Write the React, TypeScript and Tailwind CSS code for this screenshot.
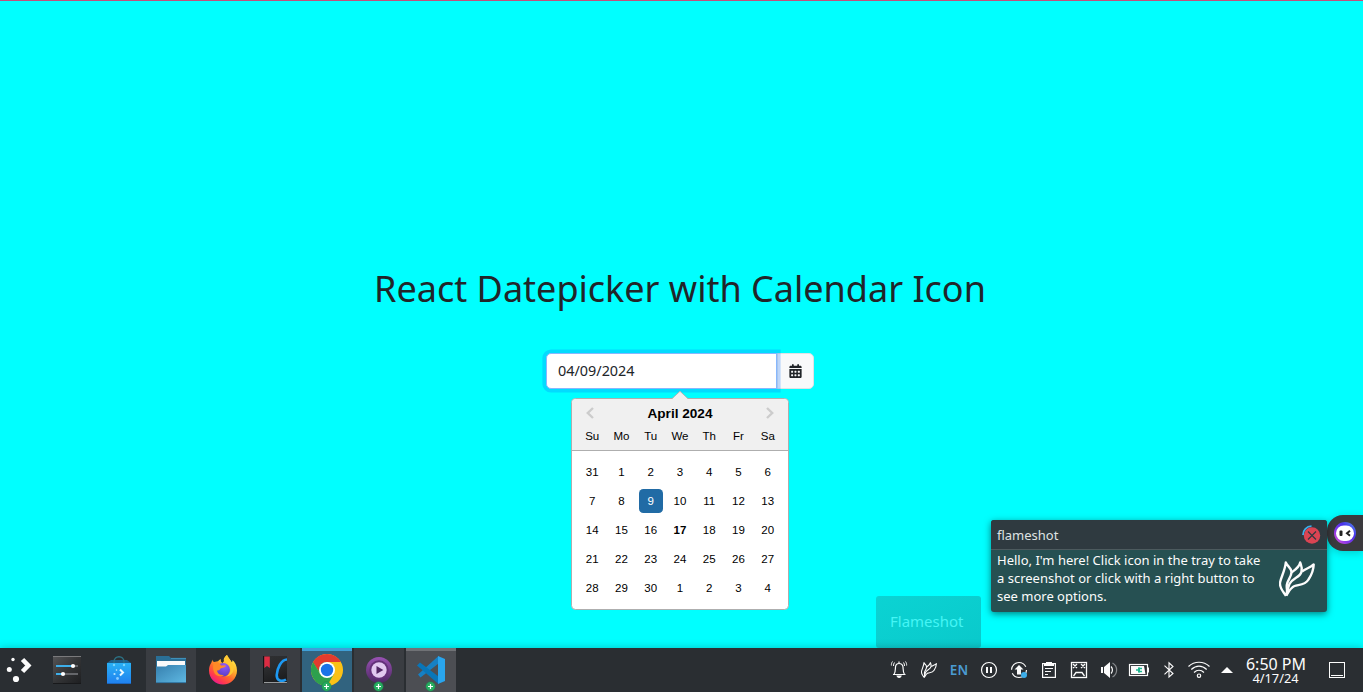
import type { ReactNode } from 'react';

const WEEKDAYS = ['Su', 'Mo', 'Tu', 'We', 'Th', 'Fr', 'Sa'];
const WEEKS = [
  [31, 1, 2, 3, 4, 5, 6],
  [7, 8, 9, 10, 11, 12, 13],
  [14, 15, 16, 17, 18, 19, 20],
  [21, 22, 23, 24, 25, 26, 27],
  [28, 29, 30, 1, 2, 3, 4],
];

function Flame({ className, weight }: { className: string; weight: number }) {
  return (
    <svg viewBox="0 0 36 36" className={className} fill="none" stroke="currentColor" strokeWidth={weight} strokeLinejoin="round">
      <path d="M7 35C5 31 0.500 28 1 22C1.500 17 6 10 6.800 1.500C8.500 5.500 12.500 7 12.500 11C12.500 16 8.500 19 7.800 24C7.300 28 9 30 7.300 34" />
      <path d="M12.500 11.500C16 9 20.500 6 21.200 1.500C22 4 23.500 6.500 22.500 10.500C21.500 16.500 14 16.500 10.500 23C8.500 27 9 31 7.300 34" />
      <path d="M23 10.500C27 7.500 31.500 6.500 34.700 3.500C34.500 10 32.500 14 29.500 18.500C26 24.500 19.500 23.500 15.500 25C11 27 9.500 31.500 7.300 34.500" />
    </svg>
  );
}

function CalendarGlyph() {
  return (
    <svg viewBox="0 0 448 512" className="h-[14px] w-[13px]" fill="#212529">
      <path d="M128 0c17.700 0 32 14.300 32 32V64H288V32c0-17.700 14.300-32 32-32s32 14.300 32 32V64h48c26.500 0 48 21.500 48 48v32H0V112C0 85.500 21.500 64 48 64H96V32c0-17.700 14.300-32 32-32zM0 180H448V464c0 26.500-21.500 48-48 48H48c-26.500 0-48-21.500-48-48V180zm64 80v44c0 8.800 7.200 16 16 16h40c8.800 0 16-7.200 16-16V264c0-8.800-7.200-16-16-16H80c-8.800 0-16 7.200-16 16zm122 0v44c0 8.800 7.200 16 16 16h40c8.800 0 16-7.200 16-16V264c0-8.800-7.200-16-16-16H202c-8.800 0-16 7.200-16 16zm138-12c-8.800 0-16 7.200-16 16v40c0 8.800 7.200 16 16 16h44c8.800 0 16-7.200 16-16V264c0-8.800-7.200-16-16-16H324zM64 392v40c0 8.800 7.200 16 16 16h40c8.800 0 16-7.200 16-16V392c0-8.800-7.200-16-16-16H80c-8.800 0-16 7.200-16 16zm138-16c-8.800 0-16 7.200-16 16v40c0 8.800 7.200 16 16 16h40c8.800 0 16-7.200 16-16V392c0-8.800-7.200-16-16-16H202zm106 16v40c0 8.800 7.200 16 16 16h44c8.800 0 16-7.200 16-16V392c0-8.800-7.200-16-16-16H324c-8.800 0-16 7.200-16 16z" />
    </svg>
  );
}

function DateInput() {
  return (
    <div className="flex h-9 w-[268px]">
      <div className="relative z-10 flex w-[231px] items-center rounded-l-[5px] border border-[#86b7fe] bg-white pl-[11px] text-[14.4px] text-[#212529] shadow-[0_0_0_3.6px_rgba(13,110,253,0.25)]">
        04/09/2024
      </div>
      <button className="flex flex-1 items-center justify-center rounded-r-[5px] border border-[#dee2e6] bg-[#f8f9fa]">
        <CalendarGlyph />
      </button>
    </div>
  );
}

function Chevron({ d }: { d: string }) {
  return (
    <svg viewBox="0 0 10 14" className="h-[14px] w-[10px]" fill="none" stroke="#ccc" strokeWidth="2.400">
      <path d={d} />
    </svg>
  );
}

function Calendar() {
  return (
    <div className="mt-[2px] flex flex-col items-center font-['Liberation_Sans',sans-serif] text-[11.52px] text-black">
      <svg viewBox="0 0 16 8" className="relative z-10 -mb-px h-2 w-4">
        <path d="M0 8L8 0L16 8Z" fill="#f0f0f0" />
        <path d="M0 7.500L8 0.300L16 7.500" fill="none" stroke="#aeaeae" strokeWidth="0.900" />
      </svg>
      <div className="w-[218px] rounded-[4.500px] border border-[#aeaeae] bg-white">
        <div className="h-[52px] rounded-t-[4px] border-b border-[#aeaeae] bg-[#f0f0f0] px-[5.600px]">
          <div className="flex h-[28px] items-center justify-between px-[7.400px]">
            <Chevron d="M8 2L2.800 7L8 12" />
            <span className="pt-px text-[13.600px] font-bold leading-[18px]">April 2024</span>
            <Chevron d="M2 2L7.200 7L2 12" />
          </div>
          <div className="grid grid-cols-7">
            {WEEKDAYS.map((d) => (
              <span key={d} className="text-center leading-[18px]">{d}</span>
            ))}
          </div>
        </div>
        <div className="px-[5.600px] pb-[6px] pt-[6px]">
          {WEEKS.map((week, w) => (
            <div key={w} className="grid h-[29px] grid-cols-7 items-center justify-items-center last:mb-px">
              {week.map((day) => (
                <span
                  key={day}
                  className={
                    day === 9
                      ? 'w-6 rounded-[4.300px] bg-[#216ba5] text-center leading-6 text-white'
                      : day === 17
                        ? 'w-6 text-center font-bold leading-6'
                        : 'w-6 text-center leading-6'
                  }
                >
                  {day}
                </span>
              ))}
            </div>
          ))}
        </div>
      </div>
    </div>
  );
}

function Notification() {
  return (
    <div className="absolute left-[991px] top-[520px] h-[92px] w-[336px] rounded-[3px] bg-[#265052] text-[13px] text-[#fcfcfc] shadow-[0_2px_7px_rgba(0,0,0,0.5)]">
      <div className="flex h-[30px] items-center justify-between rounded-t-[3px] border-b border-[#4d5a5e] bg-[#2f3a40] pl-[6px] pr-[6px] text-[13px] text-[#dfe2e3]">
        <span className="pt-[2px]">flameshot</span>
        <svg viewBox="0 0 20 20" className="h-5 w-5" fill="none">
          <path d="M2 10A8.500 8.500 0 0 1 10.500 1.200" stroke="#3daee9" strokeWidth="1.800" />
          <circle cx="11" cy="10.500" r="8.200" fill="#da4453" />
          <path d="M7 6.500L15 14.500M15 6.500L7 14.500" stroke="#2f3a40" strokeWidth="1.200" />
        </svg>
      </div>
      <div className="flex justify-between pl-[6px] pr-[12px] pt-px">
        <p className="whitespace-nowrap leading-[18px]">
          Hello, I'm here! Click icon in the tray to take
          <br />a screenshot or click with a right button to
          <br />see more options.
        </p>
        <Flame className="mt-[10px] h-9 w-9 shrink-0 text-[#fcfcfc]" weight={2.4} />
      </div>
    </div>
  );
}

function AssistantTab() {
  return (
    <div className="absolute right-0 top-[515px] flex h-9 w-[36px] items-center justify-end rounded-l-[16px] bg-[#3a3a3e] pr-[7px] shadow-[0_2px_8px_rgba(0,0,0,0.2)]">
      <svg viewBox="0 0 22 22" className="h-[22px] w-[22px]">
        <defs>
          <linearGradient id="ring" x1="0" y1="1" x2="1" y2="0">
            <stop offset="0" stopColor="#ec55d0" />
            <stop offset="0.300" stopColor="#9139e8" />
            <stop offset="0.650" stopColor="#4932e9" />
            <stop offset="1" stopColor="#5598f5" />
          </linearGradient>
        </defs>
        <circle cx="11" cy="11" r="11" fill="url(#ring)" />
        <rect x="2" y="3.500" width="18" height="15.500" rx="7.700" fill="#fff" />
        <rect x="5.500" y="8.500" width="3" height="5.500" rx="1" fill="#222" />
        <path d="M16 8.700L13 11.200L16 13.700" fill="none" stroke="#222" strokeWidth="2" />
      </svg>
    </div>
  );
}

function Badge() {
  return (
    <g>
      <circle cx="24.500" cy="38.500" r="4.700" fill="#27ae60" stroke="#20764a" strokeWidth="0.500" />
      <path d="M22 38.500H27M24.500 36V41" stroke="#fff" strokeWidth="1.200" />
    </g>
  );
}

function Tile({ tone = '', children }: { tone?: string; children: ReactNode }) {
  return (
    <svg viewBox="0 0 50 44" className={`h-11 w-[50px] shrink-0 ${tone}`} fill="none">
      {children}
    </svg>
  );
}

function Launchers() {
  return (
    <div className="flex gap-[2px]">
      <svg viewBox="0 0 40 44" className="h-11 w-10" fill="#fcfcfc">
        <path d="M22.500 11.500L28.300 17.500L22.500 23.500" fill="none" stroke="#fcfcfc" strokeWidth="4.600" />
        <circle cx="13" cy="11.500" r="1.700" />
        <circle cx="9.300" cy="21.500" r="2.500" />
        <circle cx="16" cy="31" r="3.100" />
      </svg>
      <Tile>
        <defs>
          <linearGradient id="panel" x1="0" y1="0" x2="1" y2="1">
            <stop offset="0" stopColor="#555557" />
            <stop offset="0.500" stopColor="#343537" />
            <stop offset="1" stopColor="#1d1e20" />
          </linearGradient>
        </defs>
        <rect x="11" y="8" width="28" height="28" fill="url(#panel)" />
        <path d="M11 8.500H39" stroke="#7a7a7c" />
        <path d="M11 35.500H39" stroke="#18191b" />
        <path d="M31 18H36M21 26H36" stroke="#65666a" strokeWidth="2" />
        <path d="M14 18H31M14 26H21" stroke="#3daee9" strokeWidth="2" />
        <circle cx="31" cy="18" r="2.100" fill="#fff" />
        <circle cx="21" cy="26" r="2.100" fill="#fff" />
      </Tile>
      <Tile>
        <defs>
          <linearGradient id="bag" x1="0" y1="0" x2="0" y2="1">
            <stop offset="0" stopColor="#28b0f5" />
            <stop offset="1" stopColor="#2080ef" />
          </linearGradient>
        </defs>
        <path d="M17 12H33L37 15H13Z" fill="#1c5f8e" />
        <path d="M20 17V14C20 7 30 7 30 14V17" stroke="#2c7285" strokeWidth="1.400" />
        <rect x="13" y="15" width="24" height="21" fill="url(#bag)" />
        <path d="M13 35.500H37" stroke="#1b65bb" />
        <circle cx="20" cy="17" r="1.200" fill="#75d3ff" />
        <circle cx="30" cy="17" r="1.200" fill="#75d3ff" />
        <path d="M26 21.500L29 24.500L26 27.500" stroke="#eaf8ff" strokeWidth="2" />
        <circle cx="22.500" cy="22" r="0.800" fill="#c7eaff" />
        <circle cx="20.500" cy="26" r="1.100" fill="#b7e5ff" />
        <circle cx="23.500" cy="30.500" r="1.400" fill="#86ccff" />
      </Tile>
      <Tile tone="bg-[#3a3d42]">
        <defs>
          <linearGradient id="folder" x1="0" y1="0" x2="1" y2="1">
            <stop offset="0" stopColor="#367fae" />
            <stop offset="1" stopColor="#5fb9e3" />
          </linearGradient>
        </defs>
        <path d="M10 8H23L25 10H40V20H10Z" fill="#2a6f96" />
        <path d="M25 10.400H40" stroke="#4294bd" />
        <path d="M11 13H39V22H11Z" fill="#fafafa" />
        <path d="M10 18.500H20L22 17H40V35H10Z" fill="url(#folder)" />
        <path d="M10 34.600H40" stroke="#3274a0" />
      </Tile>
      <Tile>
        <defs>
          <linearGradient id="fox" x1="0.850" y1="0.050" x2="0.250" y2="0.950">
            <stop offset="0" stopColor="#fff14f" />
            <stop offset="0.350" stopColor="#ffb52c" />
            <stop offset="0.620" stopColor="#ff6a2d" />
            <stop offset="0.850" stopColor="#ff3750" />
            <stop offset="1" stopColor="#e91e8c" />
          </linearGradient>
          <radialGradient id="globe" cx="0.600" cy="0.200" r="0.800">
            <stop offset="0" stopColor="#9059ff" />
            <stop offset="1" stopColor="#5b3fc4" />
          </radialGradient>
        </defs>
        <path d="M14.500 11.500C14.500 13 15 13.500 16 14L20 13.200C21 12 22 11.500 23 11C22.500 13 23 14 24.500 15L26 13C25 11 27 8.500 29 7C29.500 10 32 11 33.500 14C34.500 14.500 34.500 12.500 34.300 12C37 14 39 18 39 22.500C39 30.500 32.700 36.500 25 36.500S11 30.500 11 22.500C11 19 12 16.500 13.300 14.800Z" fill="url(#fox)" />
        <circle cx="25.200" cy="21.800" r="6.800" fill="url(#globe)" />
        <path d="M16 14.500C19 13 22 15 23 17.500L28 17.500C27.500 19.500 24 20 22.500 20.500C22 22 20.500 22.500 19 22.500C19.500 26 22.500 27.500 26 27C23.500 29.500 17.500 28.500 16 24C14.500 20.500 15 17 16 14.500Z" fill="#ff8a26" />
        <path d="M29 7C26 9.500 25.500 12 27.500 14C30.500 15.500 33 18 32.500 22C32.300 25 30.500 27.500 28 28.500C35 28 37.500 21 34.500 15.500Z" fill="#ffc832" />
      </Tile>
      <Tile tone="bg-[#3a3d42]">
        <defs>
          <linearGradient id="book" x1="0" y1="0" x2="0.300" y2="1">
            <stop offset="0" stopColor="#2f3032" />
            <stop offset="0.500" stopColor="#2a2b2d" />
            <stop offset="1" stopColor="#1c1d1f" />
          </linearGradient>
        </defs>
        <rect x="13" y="8" width="24" height="27.500" fill="url(#book)" />
        <path d="M13.500 8V35" stroke="#141517" />
        <path d="M14.300 8.500H19.800V20L17 18L14.300 20Z" fill="#dc2c43" />
        <path d="M37 11.500C31 11.500 27 21 26.700 27C26.500 33 32 34 36 31.500" stroke="#1d99f3" strokeWidth="2.600" />
        <path d="M14 34.600H37" stroke="#a5a7a8" />
      </Tile>
      <Tile tone="bg-[#31637f]">
        <rect width="50" height="3" fill="#3fa0d8" />
        <circle cx="25" cy="22" r="16" fill="#fbc116" />
        <path d="M11.140 14A16 16 0 0 0 25 38L31.900 26L25 22L18.100 26Z" fill="#2da04e" />
        <path d="M11.140 14L18.100 26L25 22V14Z" fill="#2da04e" />
        <path d="M11.140 14A16 16 0 0 1 38.860 14H25A8 8 0 0 0 17.200 20L16.500 22.500Z" fill="#e33b2e" />
        <circle cx="25" cy="22" r="8" fill="#fff" />
        <circle cx="25" cy="22" r="6.200" fill="#1a73e8" />
        <Badge />
      </Tile>
      <Tile tone="bg-[#3a3d42]">
        <defs>
          <linearGradient id="player" x1="0" y1="0" x2="0" y2="1">
            <stop offset="0" stopColor="#9952b4" />
            <stop offset="1" stopColor="#4f2865" />
          </linearGradient>
        </defs>
        <circle cx="25" cy="22" r="13" fill="url(#player)" />
        <circle cx="25" cy="22" r="9.700" fill="#633079" />
        <circle cx="25" cy="22" r="7.700" fill="#e2c9f0" />
        <path d="M22.500 18L29.300 22L22.500 26Z" fill="#522765" />
        <Badge />
      </Tile>
      <Tile tone="bg-[#4c4e53]">
        <rect width="50" height="3" fill="#707276" />
        <path d="M32.500 8L12 26.500L14.500 29.500L32.500 15.500Z" fill="#1680c4" />
        <path d="M32.500 36L11 17.500L14 14.500L32.500 28.500Z" fill="#0876b9" />
        <path d="M32 8L39 11V33L32 36Z" fill="#29a5ed" />
        <Badge />
      </Tile>
    </div>
  );
}

function TrayIcon({ children }: { children: ReactNode }) {
  return (
    <svg viewBox="0 0 30 44" className="h-11 w-[30px] shrink-0" fill="none" stroke="#fcfcfc" strokeWidth="1.200">
      {children}
    </svg>
  );
}

function Tray() {
  return (
    <div className="flex items-center">
      <TrayIcon>
        <path d="M9 26.500H21.500M10 26.500C11.500 24.500 11.300 22 11.500 19C11.700 16.500 13 15.500 15 15.500S18.700 16.500 19 19C19.200 22 19 24.500 20.500 26.500M15 13.500V15.500" />
        <path d="M13.200 28H17A2 2 0 0 1 13.200 28Z" fill="#fcfcfc" />
        <path d="M10.500 14.500C9.700 15.500 9.500 16.500 9.500 18M8.500 13.500C7.500 15 7.300 16 7.400 17.500M19.500 14.500C20.300 15.500 20.500 16.500 20.500 18M21.500 13.500C22.500 15 22.700 16 22.600 17.500" strokeWidth="1" />
      </TrayIcon>
      <div className="flex h-11 w-[30px] items-center justify-center">
        <Flame className="h-4 w-4 text-[#fcfcfc]" weight={2.5} />
      </div>
      <span className="w-[30px] pt-px text-center text-[13.500px] font-semibold tracking-[0.2px] text-[#4a9bd2]">EN</span>
      <TrayIcon>
        <circle cx="15" cy="22" r="7.500" />
        <path d="M13 19V25M17 19V25" strokeWidth="2" />
      </TrayIcon>
      <TrayIcon>
        <circle cx="15" cy="22" r="7.500" strokeDasharray="20 3.560" />
        <path d="M15 17L19.500 21.500H17V26.500H13V21.500H10.500Z" fill="#fcfcfc" stroke="none" />
        <circle cx="20" cy="27" r="3" fill="#3daee9" stroke="none" />
      </TrayIcon>
      <TrayIcon>
        <rect x="8.600" y="15.600" width="12.800" height="13.800" />
        <path d="M10 15H12V14H18V15H20V18H10Z" fill="#fcfcfc" stroke="none" />
        <path d="M11 20.500H19M11 23.500H17M11 26.500H14" strokeWidth="1" />
      </TrayIcon>
      <TrayIcon>
        <rect x="7.500" y="14.500" width="15" height="15" strokeWidth="1.300" />
        <path d="M9 16L13 20M13 16L9 20M17 16L21 20M21 16L17 20M9.500 28L12 24.500H18L20.500 28" strokeWidth="1.300" />
      </TrayIcon>
      <TrayIcon>
        <path d="M7 19H9V25H7ZM10 19L16 14V30L10 25Z" fill="#fcfcfc" stroke="none" />
        <path d="M17 18.500A5 5 0 0 1 17 25.500" />
        <path d="M18.500 15A8 8 0 0 1 18.500 29" stroke="#85888b" />
      </TrayIcon>
      <TrayIcon>
        <rect x="5.500" y="16.500" width="18" height="11" strokeWidth="1.200" />
        <path d="M24 19.500H25V24.500H24Z" fill="#fcfcfc" stroke="none" />
        <path d="M7 18H20L21.500 26H7Z" fill="#fcfcfc" stroke="none" />
        <path d="M12 22H14.500M14.500 20.500H18M14.500 23.500H18" stroke="#1fb690" strokeWidth="1.300" />
        <path d="M14 19.500H16V24.500H14Z" fill="#1fb690" stroke="none" />
      </TrayIcon>
      <TrayIcon>
        <path d="M10.500 17.700L19 25.500L15 29V14.800L19 18.500L10.500 26.300" strokeWidth="1.100" />
      </TrayIcon>
      <TrayIcon>
        <path d="M4.500 18.500C10.500 12.800 19.500 12.800 25.500 18.500M7.300 21.500C12 17 18 17 22.700 21.500M10 24.500C13 21.700 17 21.700 20 24.500" />
        <circle cx="15" cy="27.700" r="1.700" />
      </TrayIcon>
      <svg viewBox="0 0 26 44" className="h-11 w-[26px]" fill="#fcfcfc">
        <path d="M7 25L13 19L19 25Z" />
      </svg>
      <div className="flex w-[71px] flex-col items-center text-[#fcfcfc]">
        <span className="whitespace-nowrap pl-px text-[16px] leading-[18px]">6:50 PM</span>
        <span className="pb-px text-[12.800px] leading-[11px]">4/17/24</span>
      </div>
      <svg viewBox="0 0 52 44" className="h-11 w-[52px]" fill="none" stroke="#fcfcfc">
        <rect x="18.500" y="14.500" width="15" height="15" />
        <path d="M20 27.500H32" />
      </svg>
    </div>
  );
}

export default function App() {
  return (
    <div className="relative flex h-[692px] w-[1363px] flex-col overflow-hidden bg-[#00ffff] font-['Noto_Sans',sans-serif]">
      <main className="flex h-[648px] flex-col items-center border-t border-[#c0507c] pr-[3px] pt-[266px]">
        <h1 className="text-[36px] font-normal leading-[43px] text-[#212529]">React Datepicker with Calendar Icon</h1>
        <div className="mt-[43px] flex flex-col items-center">
          <DateInput />
          <Calendar />
        </div>
      </main>
      <div className="absolute left-[876px] top-[596px] flex h-[52px] w-[105px] items-center rounded-[3px] bg-linear-to-br from-[#0bd3d3] to-[#0ac9cb] pb-px pl-[14px] text-[15px] text-[#45f5f5]">
        Flameshot
      </div>
      <AssistantTab />
      <Notification />
      <footer className="relative flex h-11 items-center justify-between bg-[#2a2e32] shadow-[0_0_8px_rgba(0,0,0,0.25)]">
        <Launchers />
        <Tray />
      </footer>
    </div>
  );
}
